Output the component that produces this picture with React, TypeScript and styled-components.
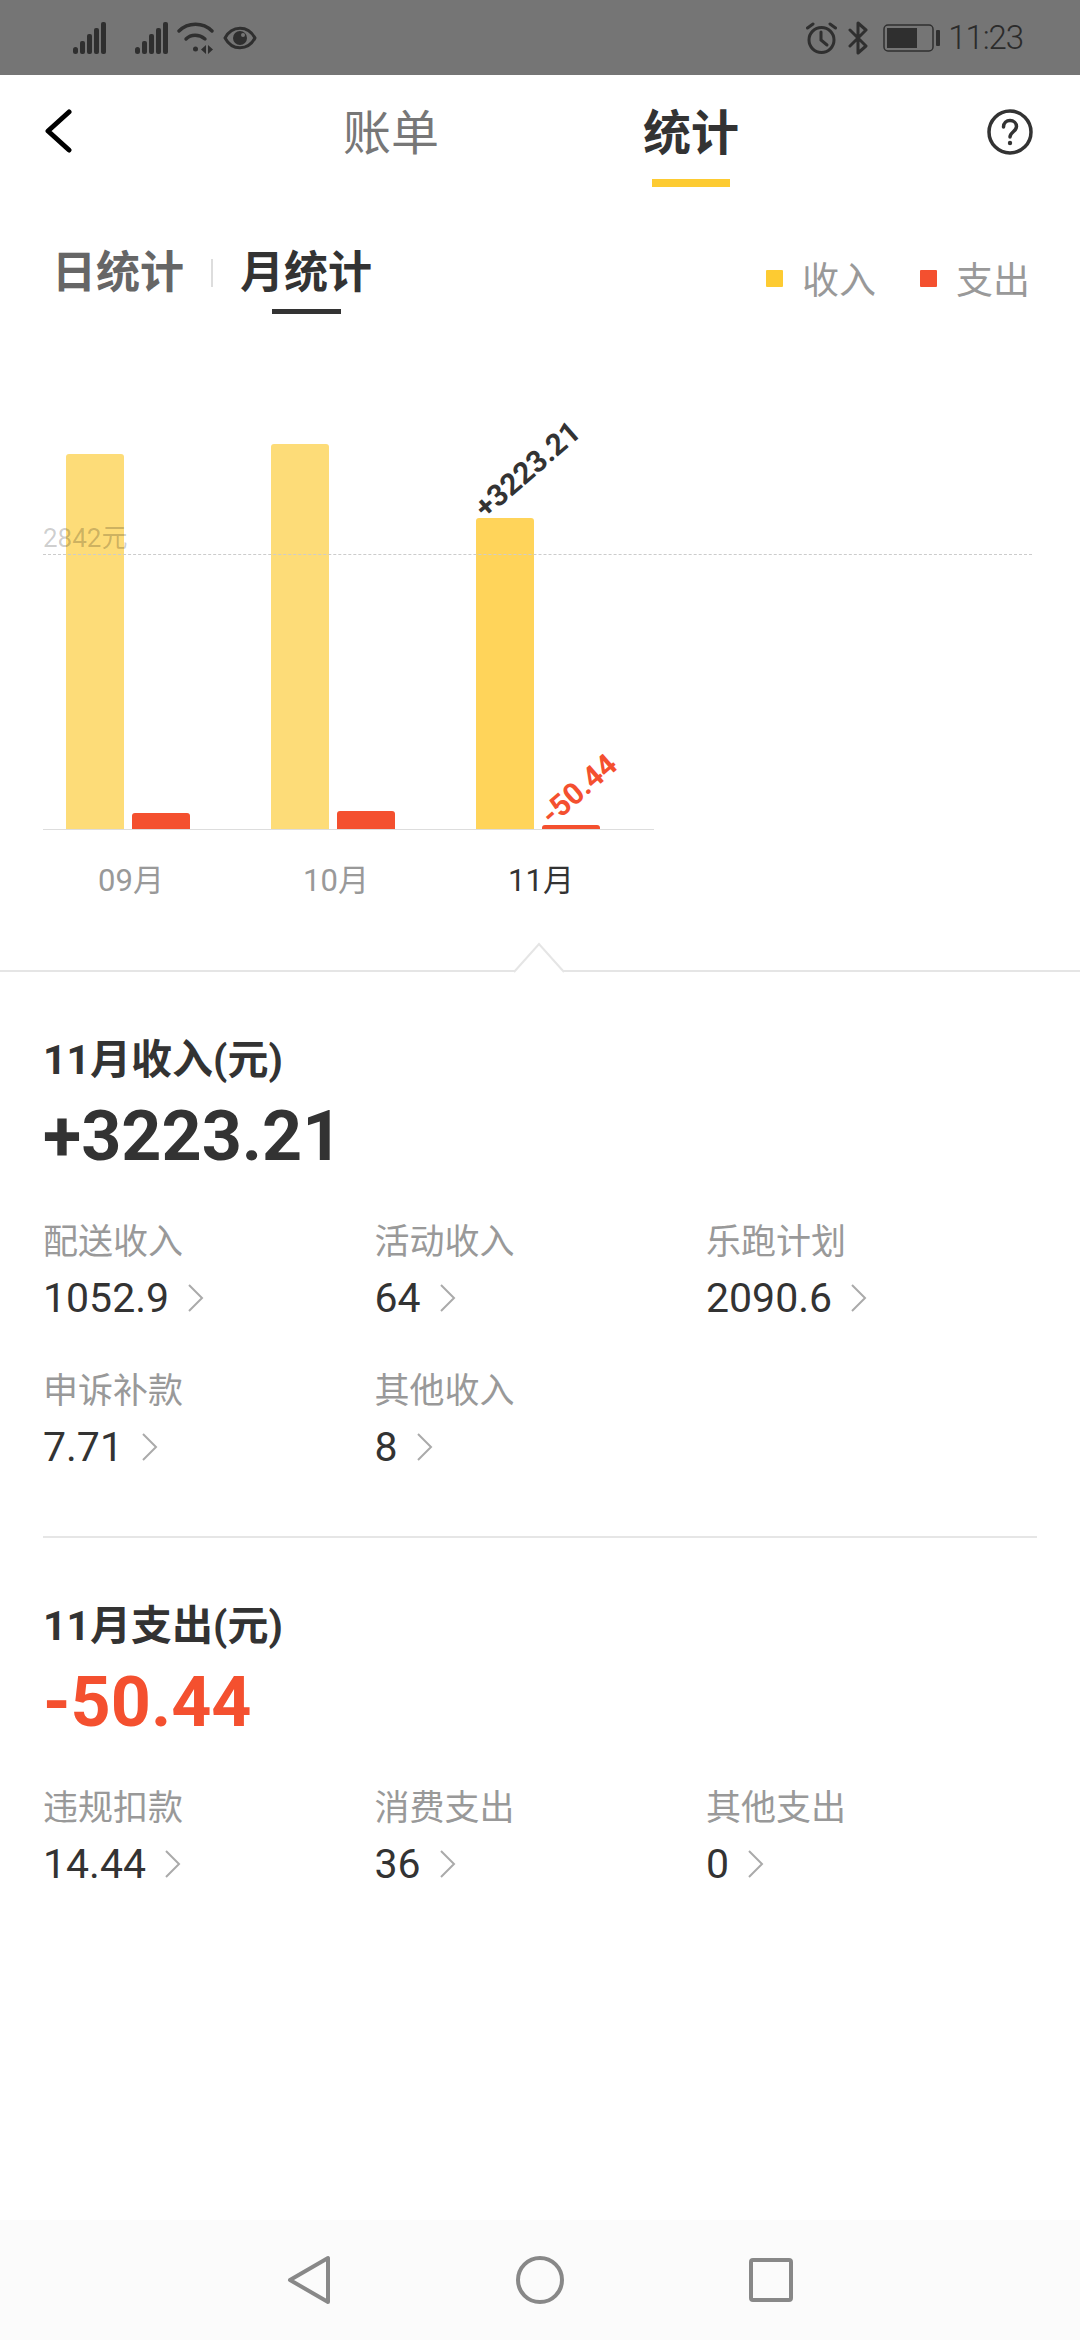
import React from 'react';
import styled, { createGlobalStyle } from 'styled-components';

const GlobalStyle = createGlobalStyle`
  html, body {
    margin: 0;
    padding: 0;
    background: #fff;
    font-family: Roboto, "Noto Sans CJK SC", sans-serif;
  }
  * { box-sizing: border-box; }
`;

const Screen = styled.div`
  position: relative;
  width: 1080px;
  height: 2340px;
  display: flex;
  flex-direction: column;
  background: #fff;
  overflow: hidden;
`;

const StatusBar = styled.div`
  height: 75px;
  flex: none;
  background: #757575;
  display: flex;
  align-items: center;
  justify-content: space-between;
  padding: 0 57px 0 73px;
  color: #2f2f2f;
`;

const StatusGroup = styled.div`
  display: flex;
  align-items: center;
`;

const StatusTime = styled.span`
  font-size: 33px;
  font-weight: 300;
  letter-spacing: -1.1px;
  margin-left: 7px;
  color: #2b2b2b;
`;

const Header = styled.header`
  height: 112px;
  flex: none;
  display: flex;
  justify-content: space-between;
  padding: 34px 47px 0 43px;
`;

const Tabs = styled.nav`
  display: flex;
  gap: 204px;
  margin-left: 22px;
`;

const Tab = styled.div<{ $active?: boolean }>`
  width: 96px;
  display: flex;
  flex-direction: column;
  align-items: center;
  font-size: 48px;
  line-height: 48px;
  margin-top: 1px;
  font-weight: ${(p) => (p.$active ? 700 : 400)};
  color: ${(p) => (p.$active ? '#333' : '#777')};
  &::after {
    content: '';
    display: ${(p) => (p.$active ? 'block' : 'none')};
    width: 78px;
    height: 8px;
    margin-top: 21px;
    background: #fdcb32;
  }
`;

const FilterRow = styled.div`
  height: 143px;
  flex: none;
  display: flex;
  justify-content: space-between;
  padding: 62px 50px 0 52px;
`;

const RangeTabs = styled.div`
  display: flex;
`;

const RangeTab = styled.div<{ $active?: boolean }>`
  display: flex;
  flex-direction: column;
  align-items: center;
  font-size: 44px;
  line-height: 48px;
  font-weight: 700;
  color: ${(p) => (p.$active ? '#333' : '#666')};
  &::after {
    content: '';
    display: ${(p) => (p.$active ? 'block' : 'none')};
    width: 69px;
    height: 5px;
    margin-top: 12px;
    background: #333;
  }
`;

const RangeDivider = styled.div`
  width: 2px;
  height: 28px;
  background: #ddd;
  margin: 10px 27px 0;
`;

const Legend = styled.div`
  display: flex;
  gap: 44px;
  padding-top: 5px;
`;

const LegendItem = styled.div`
  display: flex;
  align-items: center;
  height: 48px;
  gap: 19px;
  font-size: 37px;
  color: #999;
`;

const LegendDot = styled.span<{ $color: string }>`
  width: 17px;
  height: 17px;
  border-radius: 1px;
  background: ${(p) => p.$color};
`;

const Chart = styled.section`
  position: relative;
  height: 642px;
  flex: none;
  padding: 0 48px 0 43px;
`;

const Plot = styled.div`
  width: 611px;
  height: 500px;
  display: flex;
  align-items: flex-end;
  gap: 81px;
  padding-left: 23px;
  border-bottom: 1px solid #ddd;
`;

const MonthColumn = styled.div`
  width: 124px;
  display: flex;
  align-items: flex-end;
  justify-content: space-between;
`;

const Bar = styled.div<{ $color: string }>`
  position: relative;
  width: 58px;
  border-radius: 3px 3px 0 0;
  background: ${(p) => p.$color};
`;

const BarValue = styled.span<{ $color: string }>`
  position: absolute;
  left: 13px;
  bottom: calc(100% - 5px);
  font-size: 30px;
  line-height: 30px;
  font-weight: 700;
  white-space: nowrap;
  color: ${(p) => p.$color};
  transform: rotate(-41deg);
  transform-origin: left bottom;
`;

const AverageLine = styled.div`
  position: absolute;
  left: 43px;
  right: 48px;
  top: 224px;
  border-top: 1px dashed #ccc;
`;

const AverageLabel = styled.span`
  position: absolute;
  left: 43px;
  top: 193px;
  font-size: 26px;
  line-height: 30px;
  color: rgba(0, 0, 0, 0.2);
`;

const MonthLabels = styled.div`
  display: flex;
  gap: 81px;
  padding-left: 26px;
  margin-top: 33px;
`;

const MonthLabel = styled.div<{ $active?: boolean }>`
  width: 124px;
  text-align: center;
  font-size: 31px;
  line-height: 36px;
  color: ${(p) => (p.$active ? '#333' : '#999')};
`;

const Notch = styled.svg`
  position: absolute;
  left: 513px;
  bottom: -1px;
`;

const ChartRule = styled.div`
  position: absolute;
  left: 0;
  right: 0;
  bottom: 0;
  border-bottom: 2px solid #e5e5e5;
`;

const Summary = styled.section`
  padding: 0 43px;
  flex: none;
`;

const SummaryTitle = styled.h2`
  margin: 0;
  font-size: 41px;
  line-height: 48px;
  font-weight: 700;
  color: #333;
`;

const SummaryAmount = styled.div<{ $color: string }>`
  font-size: 70px;
  line-height: 80px;
  font-weight: 700;
  margin-top: 12px;
  color: ${(p) => p.$color};
`;

const ItemGrid = styled.div`
  display: grid;
  grid-template-columns: repeat(3, 331.5px);
  row-gap: 48px;
  margin-top: 46px;
`;

const Item = styled.div`
  display: flex;
  flex-direction: column;
`;

const ItemLabel = styled.span`
  font-size: 35px;
  line-height: 42px;
  color: #999;
`;

const ItemValue = styled.div`
  display: flex;
  align-items: center;
  gap: 18px;
  height: 50px;
  margin-top: 9px;
  font-size: 41px;
  color: #333;
`;

const SectionRule = styled.hr`
  margin: 64px 0 0;
  border: 0;
  border-top: 2px solid #e6e6e6;
  height: 0;
`;

const SectionGap = styled.div`
  height: 64px;
`;

const NavBar = styled.div`
  position: absolute;
  left: 0;
  right: 0;
  top: 2220px;
  height: 120px;
  background: #fbfbfb;
  display: flex;
  align-items: center;
  justify-content: center;
  gap: 185px;
  color: #888;
`;

const Chevron = () => (
  <svg width="17" height="28" viewBox="0 0 17 28" fill="none" stroke="#aaa" strokeWidth="2">
    <path d="M2 1l13 13L2 27" />
  </svg>
);

const SignalIcon = ({ className }: { className?: string }) => (
  <svg className={className} width="33" height="32" viewBox="0 0 33 32" fill="#2f2f2f">
    <rect x="0" y="25" width="5" height="7" rx="2.5" />
    <rect x="7" y="19" width="5" height="13" rx="2" />
    <rect x="14" y="12" width="5" height="20" rx="2" />
    <rect x="21" y="6" width="5" height="26" rx="2" />
    <rect x="28" y="0" width="5" height="32" rx="2" />
  </svg>
);

const SecondSignal = styled(SignalIcon)`
  margin-left: 29px;
`;

const WifiIcon = styled.svg`
  margin-left: 9px;
`;

const EyeIcon = styled.svg`
  margin-left: 9px;
`;

const BluetoothIcon = styled.svg`
  margin-left: 11px;
`;

const BatteryIcon = styled.svg`
  margin-left: 15px;
`;

const months = [
  { name: '09月', income: 375, spend: 16 },
  { name: '10月', income: 385, spend: 18 },
  { name: '11月', income: 311, spend: 4, incomeText: '+3223.21', spendText: '-50.44', active: true },
];

const incomeItems = [
  { label: '配送收入', value: '1052.9' },
  { label: '活动收入', value: '64' },
  { label: '乐跑计划', value: '2090.6' },
  { label: '申诉补款', value: '7.71' },
  { label: '其他收入', value: '8' },
];

const spendItems = [
  { label: '违规扣款', value: '14.44' },
  { label: '消费支出', value: '36' },
  { label: '其他支出', value: '0' },
];

const Items = ({ data }: { data: { label: string; value: string }[] }) => (
  <ItemGrid>
    {data.map((item) => (
      <Item key={item.label}>
        <ItemLabel>{item.label}</ItemLabel>
        <ItemValue>
          {item.value}
          <Chevron />
        </ItemValue>
      </Item>
    ))}
  </ItemGrid>
);

const App: React.FC = () => {
  return (
    <Screen>
      <GlobalStyle />
      <StatusBar>
        <StatusGroup>
          <SignalIcon />
          <SecondSignal />
          <WifiIcon width="37" height="32" viewBox="0 0 37 32" fill="none" stroke="#2f2f2f" strokeWidth="3.4" strokeLinecap="round">
            <path d="M2 9C11 0 26 0 35 9" />
            <path d="M9 17c5-5 13-5 19 0" />
            <circle cx="18.500" cy="27" r="2.500" fill="#2f2f2f" stroke="none" />
            <path d="M29 23v9l-5-4.500zM31 23v9l5-4.500z" fill="#2f2f2f" stroke="none" />
          </WifiIcon>
          <EyeIcon width="34" height="28" viewBox="0 0 34 28" fill="none" stroke="#2f2f2f" strokeWidth="3">
            <path d="M2 14C9 1 25 1 32 14 25 27 9 27 2 14z" strokeLinejoin="round" />
            <circle cx="17" cy="14" r="7" fill="#2f2f2f" stroke="none" />
            <circle cx="20" cy="11" r="2" fill="#757575" stroke="none" />
          </EyeIcon>
        </StatusGroup>
        <StatusGroup>
          <svg width="31" height="32" viewBox="0 0 31 32" fill="none" stroke="#2f2f2f" strokeWidth="3" strokeLinecap="round">
            <circle cx="15.500" cy="18" r="12.500" />
            <path d="M15 10v8l6 5" />
            <path d="M1.500 6L7 2M29.500 6L24 2" />
          </svg>
          <BluetoothIcon width="20" height="34" viewBox="0 0 20 34" fill="none" stroke="#2f2f2f" strokeWidth="3" strokeLinecap="round" strokeLinejoin="round">
            <path d="M2 9l16 16-8 7V2l8 7L2 25" />
          </BluetoothIcon>
          <BatteryIcon width="58" height="28" viewBox="0 0 58 28">
            <rect x="1" y="1" width="49" height="26" rx="4" fill="none" stroke="#2f2f2f" strokeWidth="1.500" />
            <rect x="4" y="4" width="30" height="20" fill="#2f2f2f" />
            <rect x="53" y="6" width="4" height="16" rx="1" fill="#2f2f2f" />
          </BatteryIcon>
          <StatusTime>11:23</StatusTime>
        </StatusGroup>
      </StatusBar>

      <Header>
        <svg width="30" height="44" viewBox="0 0 30 44" fill="none" stroke="#000" strokeWidth="5" strokeLinecap="round" strokeLinejoin="round">
          <path d="M26 3L5 22l21 19" />
        </svg>
        <Tabs>
          <Tab>账单</Tab>
          <Tab $active>统计</Tab>
        </Tabs>
        <svg width="46" height="46" viewBox="0 0 46 46" fill="none" stroke="#333" strokeWidth="3.500">
          <circle cx="23" cy="23" r="21" />
          <path d="M16.500 18c0-4 3-6.500 6.500-6.500s6.500 2.500 6.500 6c0 5-6.500 5.500-6.500 10.500" strokeLinecap="round" />
          <circle cx="23" cy="34" r="2.200" fill="#333" stroke="none" />
        </svg>
      </Header>

      <FilterRow>
        <RangeTabs>
          <RangeTab>日统计</RangeTab>
          <RangeDivider />
          <RangeTab $active>月统计</RangeTab>
        </RangeTabs>
        <Legend>
          <LegendItem>
            <LegendDot $color="#fdcb32" />
            收入
          </LegendItem>
          <LegendItem>
            <LegendDot $color="#f4502f" />
            支出
          </LegendItem>
        </Legend>
      </FilterRow>

      <Chart>
        <Plot>
          {months.map((m) => (
            <MonthColumn key={m.name}>
              <Bar $color={m.active ? '#ffd45a' : '#fddc78'} style={{ height: m.income }}>
                {m.incomeText && <BarValue $color="#333">{m.incomeText}</BarValue>}
              </Bar>
              <Bar $color="#f4502f" style={{ height: m.spend }}>
                {m.spendText && <BarValue $color="#f4502f">{m.spendText}</BarValue>}
              </Bar>
            </MonthColumn>
          ))}
        </Plot>
        <AverageLine />
        <AverageLabel>2842元</AverageLabel>
        <MonthLabels>
          {months.map((m) => (
            <MonthLabel key={m.name} $active={m.active}>
              {m.name}
            </MonthLabel>
          ))}
        </MonthLabels>
        <ChartRule />
        <Notch width="52" height="31" viewBox="0 0 52 31" fill="#fff" stroke="#e5e5e5" strokeWidth="2">
          <path d="M1 30L26 2l25 28" />
        </Notch>
      </Chart>

      <Summary>
        <SectionGap />
        <SummaryTitle>11月收入(元)</SummaryTitle>
        <SummaryAmount $color="#333">+3223.21</SummaryAmount>
        <Items data={incomeItems} />
        <SectionRule />
        <SectionGap />
        <SummaryTitle>11月支出(元)</SummaryTitle>
        <SummaryAmount $color="#f4502f">-50.44</SummaryAmount>
        <Items data={spendItems} />
      </Summary>

      <NavBar>
        <svg width="44" height="50" viewBox="0 0 44 50" fill="none" stroke="#888" strokeWidth="4" strokeLinejoin="round">
          <path d="M41 3v44L3 25z" />
        </svg>
        <svg width="48" height="48" viewBox="0 0 48 48" fill="none" stroke="#888" strokeWidth="4">
          <circle cx="24" cy="24" r="22" />
        </svg>
        <svg width="44" height="44" viewBox="0 0 44 44" fill="none" stroke="#888" strokeWidth="4" strokeLinejoin="round">
          <rect x="2" y="2" width="40" height="40" rx="2" />
        </svg>
      </NavBar>
    </Screen>
  );
};

export default App;
